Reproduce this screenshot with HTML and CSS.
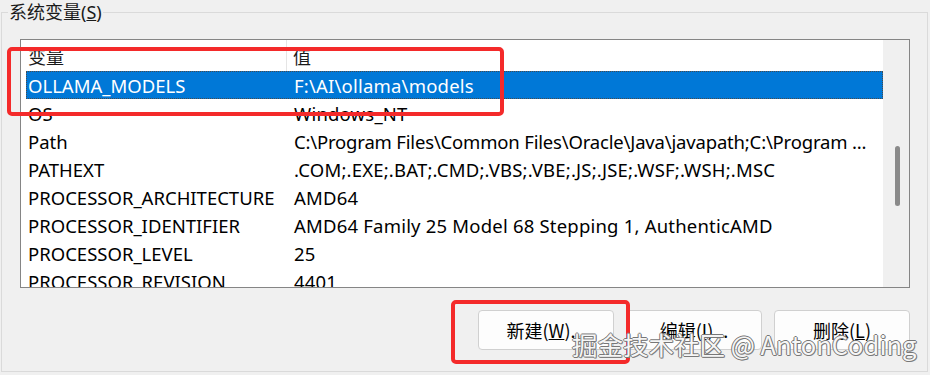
FILE: index.html
```html
<!DOCTYPE html>
<html lang="zh-CN">
<head>
<meta charset="utf-8">
<title>系统变量</title>
<link rel="stylesheet" href="styles.css">
</head>
<body>
<fieldset class="group">
  <legend class="group-title">系统变量(<u>S</u>)</legend>
  <div class="listbox">
    <div class="list">
      <div class="list-head">
        <div class="col1">变量</div>
        <div class="col2">值</div>
      </div>
      <div class="row selected"><div class="c1">OLLAMA_MODELS</div><div class="c2">F:\AI\ollama\models</div></div>
      <div class="row"><div class="c1">OS</div><div class="c2">Windows_NT</div></div>
      <div class="row"><div class="c1">Path</div><div class="c2 tight">C:\Program Files\Common Files\Oracle\Java\javapath;C:\Program ...</div></div>
      <div class="row"><div class="c1">PATHEXT</div><div class="c2">.COM;.EXE;.BAT;.CMD;.VBS;.VBE;.JS;.JSE;.WSF;.WSH;.MSC</div></div>
      <div class="row"><div class="c1">PROCESSOR_ARCHITECTURE</div><div class="c2">AMD64</div></div>
      <div class="row"><div class="c1">PROCESSOR_IDENTIFIER</div><div class="c2">AMD64 Family 25 Model 68 Stepping 1, AuthenticAMD</div></div>
      <div class="row"><div class="c1">PROCESSOR_LEVEL</div><div class="c2">25</div></div>
      <div class="row"><div class="c1">PROCESSOR_REVISION</div><div class="c2">4401</div></div>
    </div>
    <div class="scrollbar"><div class="thumb"></div></div>
  </div>
  <div class="buttons">
    <button class="btn">新建(<u>W</u>)...</button>
    <button class="btn">编辑(<u>I</u>)...</button>
    <button class="btn">删除(<u>L</u>)</button>
  </div>
</fieldset>
<div class="mark mark-list"></div>
<div class="mark mark-btn"></div>
<div class="watermark">掘金技术社区 @ AntonCoding</div>
</body>
</html>
```

FILE: styles.css
```css
* { box-sizing: border-box; }
html, body {
  margin: 0;
  padding: 0;
  width: 930px;
  height: 375px;
  overflow: hidden;
  background: #f0f0f0;
  font-family: "Noto Sans", "Noto Sans CJK SC", sans-serif;
  font-size: 18.5px;
  color: #000;
  position: relative;
}
.group {
  margin: 0 0 0 1px;
  width: 927px;
  height: 372px;
  border: 1px solid #dadada;
  padding: 15px 17px 0 18px;
  min-width: 0;
}
.group-title {
  padding: 0 1px;
  margin-left: -12px;
  line-height: 24px;
  height: 24px;
  font-size: 18px;
  color: #1a1a1a;
}
.listbox {
  width: 890px;
  height: 249px;
  border: 1px solid #858585;
  background: #fff;
  display: flex;
  overflow: hidden;
}
.list {
  width: 862px;
  overflow: hidden;
}
.list-head {
  display: flex;
  height: 31px;
  align-items: center;
  font-size: 18px;
}
.list-head .col1 {
  width: 266px;
  padding-left: 7px;
  height: 100%;
  display: flex;
  align-items: center;
  border-right: 1px solid #e5e5e5;
  color: #1a1a1a;
}
.list-head .col2 {
  padding-left: 6px;
  color: #1a1a1a;
}
.row {
  display: flex;
  height: 28px;
  align-items: center;
  margin-left: 5px;
  white-space: nowrap;
  border: 1px solid transparent;
}
.row .c1 {
  width: 261px;
  padding-left: 1px;
  flex: none;
}
.row .c2 {
  padding-left: 6px;
  flex: none;
  letter-spacing: 0.2px;
}
.row .c2.tight {
  letter-spacing: -0.18px;
}
.row.selected {
  background: #0078d7;
  color: #fff;
  border: 1px dotted #4a4a4a;
}
.scrollbar {
  width: 26px;
  background: #f0f0f0;
  display: flex;
  justify-content: center;
  padding-top: 106px;
  padding-left: 2px;
}
.thumb {
  width: 5px;
  height: 60px;
  border-radius: 3px;
  background: #8a8a8a;
}
.buttons {
  display: flex;
  justify-content: flex-end;
  gap: 12px;
  margin-top: 22px;
}
.btn {
  width: 136px;
  height: 40px;
  border: 1px solid #d0d0d0;
  border-radius: 4px;
  background: #fdfdfd;
  font-family: "Noto Sans CJK SC", "Noto Sans", sans-serif;
  font-size: 18px;
  color: #000;
  padding: 0;
}
.mark {
  position: absolute;
  border: 4px solid #f42a2a;
  border-radius: 5px;
}
.mark-list {
  left: 7px;
  top: 47px;
  width: 497px;
  height: 69px;
}
.mark-btn {
  left: 451px;
  top: 300px;
  width: 179px;
  height: 64px;
}
.watermark {
  position: absolute;
  left: 572px;
  top: 327px;
  font-family: "Noto Sans CJK SC", "Noto Sans", sans-serif;
  font-size: 25.5px;
  line-height: 34px;
  white-space: nowrap;
  color: #f6f6f6;
  text-shadow: -1px 0 #777, 1px 0 #777, 0 -1px #777, 0 1px #777, 1px 1px #999;
}
```
